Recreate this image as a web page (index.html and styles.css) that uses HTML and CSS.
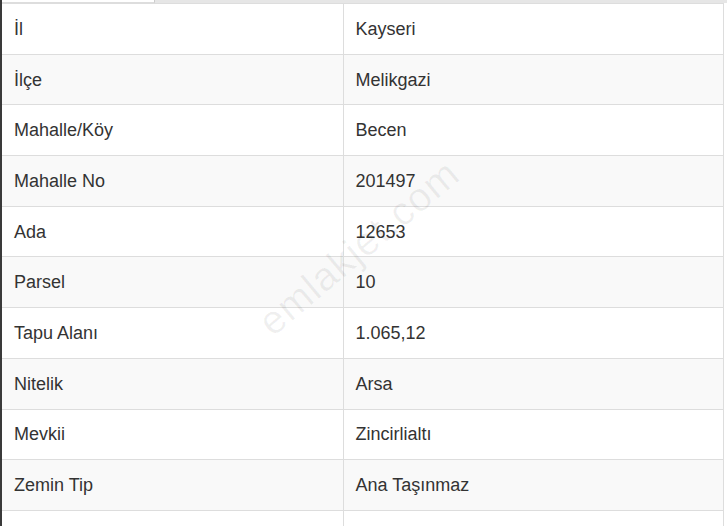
FILE: index.html
```html
<!DOCTYPE html>
<html lang="tr">
<head>
<meta charset="utf-8">
<link rel="stylesheet" href="styles.css">
</head>
<body>
<div class="page">
  <div class="tabs"><div class="tab-active"></div><div class="tab-rest"></div></div>
  <div class="wrap">
    <table class="info">
      <tbody>
        <tr><td>İl</td><td>Kayseri</td></tr>
        <tr><td>İlçe</td><td>Melikgazi</td></tr>
        <tr><td>Mahalle/Köy</td><td>Becen</td></tr>
        <tr><td>Mahalle No</td><td>201497</td></tr>
        <tr><td>Ada</td><td>12653</td></tr>
        <tr><td>Parsel</td><td>10</td></tr>
        <tr><td>Tapu Alanı</td><td>1.065,12</td></tr>
        <tr><td>Nitelik</td><td>Arsa</td></tr>
        <tr><td>Mevkii</td><td>Zincirlialtı</td></tr>
        <tr><td>Zemin Tip</td><td>Ana Taşınmaz</td></tr>
        <tr><td>&nbsp;</td><td>&nbsp;</td></tr>
      </tbody>
    </table>
    <div class="watermark">emlakjet.com</div>
  </div>
</div>
</body>
</html>
```
FILE: styles.css
```css
* { box-sizing: border-box; }
html, body { margin: 0; padding: 0; background: #fff; }
body {
  font-family: "Liberation Sans", Arial, sans-serif;
  color: #333;
  overflow: hidden;
  height: 526px;
}
.page {
  border-left: 2px solid #3a3a3a;
  width: 727px;
}
.tabs {
  display: flex;
  height: 3px;
}
.tab-active {
  width: 153px;
  border-bottom: 1px solid #ddd;
  border-right: 1px solid #ccc;
  background: #fff;
}
.tab-rest {
  flex: 1;
  background: #e6e6e6;
}
.wrap {
  position: relative;
  width: 722px;
}
.info {
  width: 722px;
  border-collapse: collapse;
  font-size: 18px;
  table-layout: fixed;
}
.info td {
  height: 50.7px;
  padding: 0 12px;
  vertical-align: middle;
  border: 1px solid #ddd;
  line-height: 20px;
}
.info td:first-child { width: 341px; border-left: none; }
.info tr:nth-child(even) td { background: #f9f9f9; }
.watermark {
  position: absolute;
  left: 233px;
  top: 222px;
  font-size: 40px;
  color: rgba(0,0,0,0.06);
  transform: rotate(-40deg);
  transform-origin: center;
  pointer-events: none;
  white-space: nowrap;
  letter-spacing: 1px;
}
```
